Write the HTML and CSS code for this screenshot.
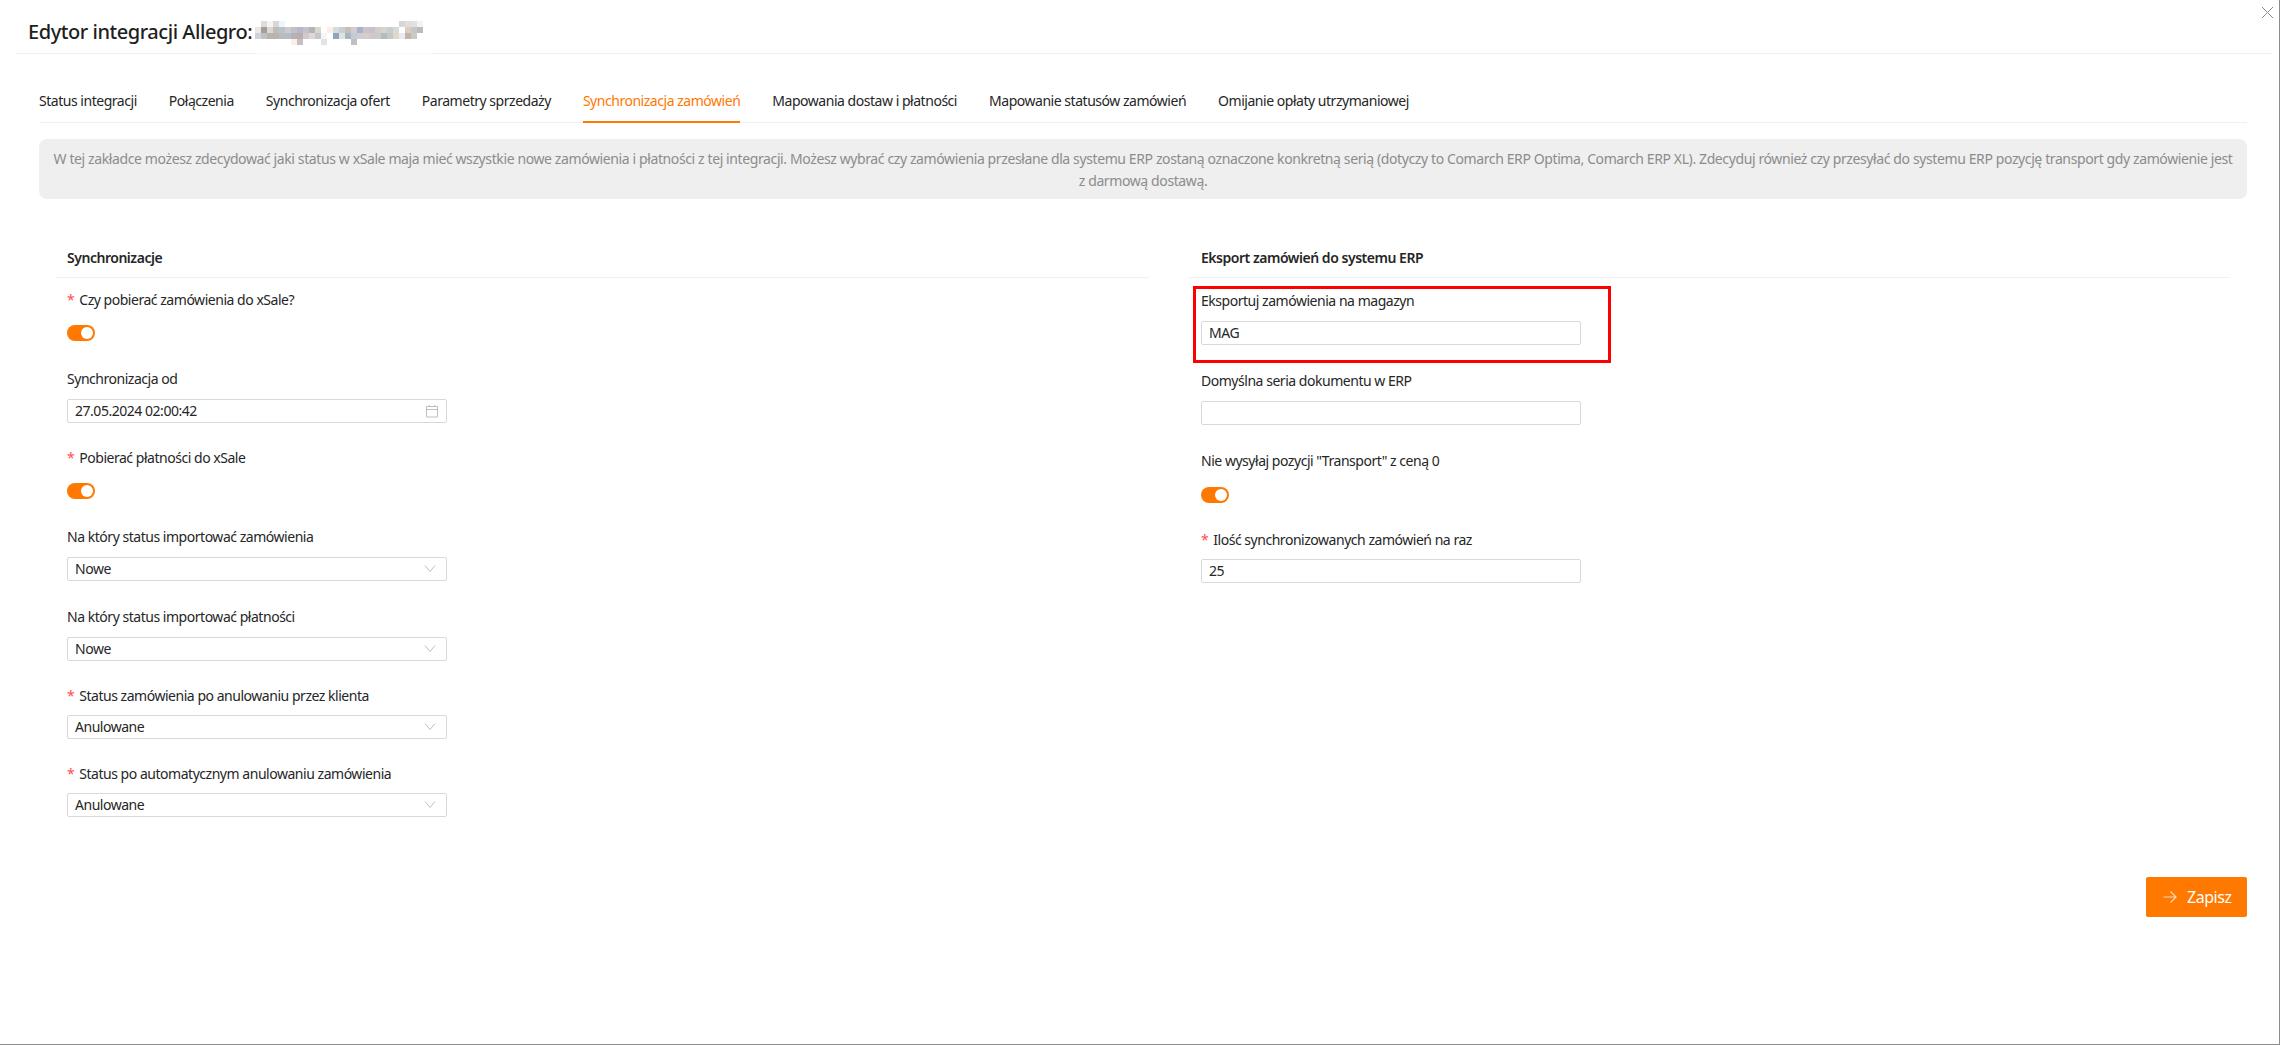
FILE: index.html
```html
<!DOCTYPE html>
<html lang="pl">

<head>
    <meta charset="UTF-8">
    <title>Edytor integracji Allegro</title>
    <link rel="stylesheet" href="styles.css">
</head>

<body>
    <div class="window">
        <a class="close_btn">
            <svg width="13" height="13" viewBox="0 0 13 13"><path d="M1 1L12 12M12 1L1 12" stroke="#8c8c8c" stroke-width="1" fill="none"/></svg>
        </a>
        <div class="title_bar">
            <h1>Edytor integracji Allegro:</h1>
            <!-- zamazana nazwa konta -->
            <svg class="blur_name" width="178" height="34" viewBox="0 0 178 34" shape-rendering="crispEdges">
                <rect x="0" y="33" width="178" height="1" fill="#fafafa"/>
                <g>
                    <rect x="6" y="1" width="6" height="6" fill="#dedbdc"/>
                    <rect x="12" y="1" width="6" height="6" fill="#f9f3ee"/>
                    <rect x="18" y="1" width="6" height="6" fill="#dad7d5"/>
                    <rect x="24" y="1" width="6" height="6" fill="#eef6fb"/>
                    <rect x="144" y="1" width="6" height="6" fill="#d8d5d5"/>
                    <rect x="150" y="1" width="6" height="6" fill="#e0dddd"/>
                    <rect x="156" y="1" width="6" height="6" fill="#e2e1e1"/>
                    <rect x="162" y="1" width="6" height="6" fill="#eef5f2"/>
                </g>
                <g>
                    <rect x="0" y="7" width="6" height="6" fill="#f0e6df"/>
                    <rect x="6" y="7" width="6" height="6" fill="#9f9f9c"/>
                    <rect x="12" y="7" width="6" height="6" fill="#dcd7d0"/>
                    <rect x="18" y="7" width="6" height="6" fill="#bfbdb9"/>
                    <rect x="24" y="7" width="6" height="6" fill="#b8c4cc"/>
                    <rect x="30" y="7" width="6" height="6" fill="#cfc9cb"/>
                    <rect x="36" y="7" width="6" height="6" fill="#c2c0c7"/>
                    <rect x="42" y="7" width="6" height="6" fill="#b5b8c8"/>
                    <rect x="48" y="7" width="6" height="6" fill="#c4c0cc"/>
                    <rect x="54" y="7" width="6" height="6" fill="#b5b2b8"/>
                    <rect x="60" y="7" width="6" height="6" fill="#d8d8cc"/>
                    <rect x="72" y="7" width="6" height="6" fill="#fbefe6"/>
                    <rect x="78" y="7" width="6" height="6" fill="#d5dde2"/>
                    <rect x="84" y="7" width="6" height="6" fill="#cbd0ce"/>
                    <rect x="90" y="7" width="6" height="6" fill="#c4bfba"/>
                    <rect x="96" y="7" width="6" height="6" fill="#d0ccd0"/>
                    <rect x="102" y="7" width="6" height="6" fill="#a9b2c9"/>
                    <rect x="108" y="7" width="6" height="6" fill="#c9c5c9"/>
                    <rect x="114" y="7" width="6" height="6" fill="#c8c2c6"/>
                    <rect x="120" y="7" width="6" height="6" fill="#d2cccb"/>
                    <rect x="126" y="7" width="6" height="6" fill="#d7d5ca"/>
                    <rect x="132" y="7" width="6" height="6" fill="#c5ced0"/>
                    <rect x="138" y="7" width="6" height="6" fill="#d6d9d6"/>
                    <rect x="150" y="7" width="6" height="6" fill="#ddccc2"/>
                    <rect x="156" y="7" width="6" height="6" fill="#c9c4c6"/>
                    <rect x="162" y="7" width="6" height="6" fill="#bdbbb3"/>
                </g>
                <g>
                    <rect x="0" y="13" width="6" height="6" fill="#cdd2d6"/>
                    <rect x="6" y="13" width="6" height="6" fill="#c0c1c3"/>
                    <rect x="12" y="13" width="6" height="6" fill="#b7b4ae"/>
                    <rect x="18" y="13" width="6" height="6" fill="#b8b4ae"/>
                    <rect x="24" y="13" width="6" height="6" fill="#b8bcbe"/>
                    <rect x="30" y="13" width="6" height="6" fill="#b3bcc8"/>
                    <rect x="36" y="13" width="6" height="6" fill="#bab0b4"/>
                    <rect x="42" y="13" width="6" height="6" fill="#b9adb0"/>
                    <rect x="48" y="13" width="6" height="6" fill="#cfc9c8"/>
                    <rect x="54" y="13" width="6" height="6" fill="#e0d6d2"/>
                    <rect x="60" y="13" width="6" height="6" fill="#c4c8cc"/>
                    <rect x="66" y="13" width="6" height="6" fill="#f4f6f8"/>
                    <rect x="78" y="13" width="6" height="6" fill="#8fa2c0"/>
                    <rect x="84" y="13" width="6" height="6" fill="#dde4e0"/>
                    <rect x="90" y="13" width="6" height="6" fill="#a9b5c0"/>
                    <rect x="96" y="13" width="6" height="6" fill="#c8ccd0"/>
                    <rect x="102" y="13" width="6" height="6" fill="#ccced4"/>
                    <rect x="108" y="13" width="6" height="6" fill="#d8ccc8"/>
                    <rect x="114" y="13" width="6" height="6" fill="#d0c8c8"/>
                    <rect x="120" y="13" width="6" height="6" fill="#c8cacc"/>
                    <rect x="126" y="13" width="6" height="6" fill="#b5bcb8"/>
                    <rect x="132" y="13" width="6" height="6" fill="#c4c8c4"/>
                    <rect x="138" y="13" width="6" height="6" fill="#e0d8c8"/>
                    <rect x="144" y="13" width="6" height="6" fill="#e4ecf4"/>
                    <rect x="150" y="13" width="6" height="6" fill="#c4b4a4"/>
                    <rect x="156" y="13" width="6" height="6" fill="#c8ccc8"/>
                </g>
                <g>
                    <rect x="36" y="19" width="6" height="6" fill="#f8efe8"/>
                    <rect x="42" y="19" width="6" height="6" fill="#c8c0c0"/>
                    <rect x="66" y="19" width="6" height="6" fill="#e4e2e2"/>
                    <rect x="96" y="19" width="6" height="6" fill="#c0bfc2"/>
                </g>
            </svg>
        </div>

        <ul class="tabs">
            <li>Status integracji</li>
            <li>Połączenia</li>
            <li>Synchronizacja ofert</li>
            <li>Parametry sprzedaży</li>
            <li class="active">Synchronizacja zamówień</li>
            <li>Mapowania dostaw i płatności</li>
            <li>Mapowanie statusów zamówień</li>
            <li>Omijanie opłaty utrzymaniowej</li>
        </ul>

        <div class="info_box">W tej zakładce możesz zdecydować jaki status w xSale maja mieć wszystkie nowe zamówienia i płatności z tej integracji. Możesz wybrać czy zamówienia przesłane dla systemu ERP zostaną oznaczone konkretną serią (dotyczy to Comarch ERP Optima, Comarch ERP XL). Zdecyduj również czy przesyłać do systemu ERP pozycję transport gdy zamówienie jest<br>z darmową dostawą.</div>

        <div class="columns">
            <section class="col col_left">
                <h2>Synchronizacje</h2>
                <div class="field field_req field_toggle">
                    <label><span class="req">*</span>Czy pobierać zamówienia do xSale?</label>
                    <div class="control"><span class="switch"></span></div>
                </div>
                <div class="field">
                    <label>Synchronizacja od</label>
                    <div class="input"><span>27.05.2024 02:00:42</span>
                        <svg class="cal" width="14" height="14" viewBox="0 0 14 14"><path d="M1.5 2.5H12.5V13H1.5ZM1.5 5.5H12.5M4 1V3M10 1V3" stroke="#bfbfbf" fill="none"/></svg>
                    </div>
                </div>
                <div class="field field_req field_toggle">
                    <label><span class="req">*</span>Pobierać płatności do xSale</label>
                    <div class="control"><span class="switch"></span></div>
                </div>
                <div class="field">
                    <label>Na który status importować zamówienia</label>
                    <div class="input"><span>Nowe</span>
                        <svg class="arrow" width="12" height="12" viewBox="0 0 12 12"><path d="M1 2.5L6 8.5L11 2.5" stroke="#bfbfbf" fill="none"/></svg>
                    </div>
                </div>
                <div class="field">
                    <label>Na który status importować płatności</label>
                    <div class="input"><span>Nowe</span>
                        <svg class="arrow" width="12" height="12" viewBox="0 0 12 12"><path d="M1 2.5L6 8.5L11 2.5" stroke="#bfbfbf" fill="none"/></svg>
                    </div>
                </div>
                <div class="field field_req">
                    <label><span class="req">*</span>Status zamówienia po anulowaniu przez klienta</label>
                    <div class="input"><span>Anulowane</span>
                        <svg class="arrow" width="12" height="12" viewBox="0 0 12 12"><path d="M1 2.5L6 8.5L11 2.5" stroke="#bfbfbf" fill="none"/></svg>
                    </div>
                </div>
                <div class="field field_req">
                    <label><span class="req">*</span>Status po automatycznym anulowaniu zamówienia</label>
                    <div class="input"><span>Anulowane</span>
                        <svg class="arrow" width="12" height="12" viewBox="0 0 12 12"><path d="M1 2.5L6 8.5L11 2.5" stroke="#bfbfbf" fill="none"/></svg>
                    </div>
                </div>
            </section>

            <section class="col col_right">
                <h2>Eksport zamówień do systemu ERP</h2>
                <div class="field marked">
                    <label>Eksportuj zamówienia na magazyn</label>
                    <div class="input"><span>MAG</span></div>
                </div>
                <div class="field">
                    <label>Domyślna seria dokumentu w ERP</label>
                    <div class="input"></div>
                </div>
                <div class="field field_toggle">
                    <label>Nie wysyłaj pozycji "Transport" z ceną 0</label>
                    <div class="control"><span class="switch"></span></div>
                </div>
                <div class="field field_req">
                    <label><span class="req">*</span>Ilość synchronizowanych zamówień na raz</label>
                    <div class="input"><span>25</span></div>
                </div>
            </section>
        </div>

        <div class="actions">
            <a class="save_btn">
                <svg width="14" height="14" viewBox="0 0 14 14"><path d="M0.5 7H13M7.5 1.5L13 7L7.5 12.5" stroke="#ffd9b8" stroke-width="1.2" fill="none"/></svg>
                Zapisz
            </a>
        </div>
    </div>
</body>

</html>
```

FILE: styles.css
```css
* {
    margin: 0;
    padding: 0;
    box-sizing: border-box;
}

html,
body {
    height: 100%;
    background: #fff;
}

body {
    font-family: "Noto Sans", "Open Sans", sans-serif;
    font-size: 14px;
    letter-spacing: -0.47px;
    color: #262626;
    overflow: hidden;
}

.window {
    position: relative;
    height: 1045px;
    width: 2280px;
    border-right: 1px solid #8c8c8c;
    border-bottom: 1px solid #8c8c8c;
}

.close_btn {
    position: absolute;
    top: 6px;
    left: 2261px;
    line-height: 0;
}

.title_bar {
    height: 54px;
    margin: 0 7px 0 15px;
    padding: 17px 0 0 13px;
    border-bottom: 1px solid #f0f0f0;
    display: flex;
    align-items: flex-start;
}

.title_bar h1 {
    font-size: 20px;
    font-weight: 500;
    line-height: 30px;
    letter-spacing: -0.45px;
    color: #1f1f1f;
}

.blur_name {
    flex: none;
    margin: 3px 0 0 3px;
}

.tabs {
    list-style: none;
    display: flex;
    gap: 32px;
    margin: 33px 32px 0 39px;
    height: 36px;
    border-bottom: 1px solid #f0f0f0;
}

.tabs li {
    line-height: 27px;
    height: 36px;
    white-space: nowrap;
}

.tabs .active {
    color: #ff7800;
    border-bottom: 2px solid #ff7800;
}

.info_box {
    margin: 16px 32px 0 39px;
    height: 60px;
    padding: 9px 12px 0;
    background: #efefef;
    border-radius: 8px;
    color: #8c8c8c;
    line-height: 22px;
    letter-spacing: -0.39px;
    text-align: center;
    white-space: nowrap;
}

.columns {
    display: flex;
    gap: 40px;
    margin: 48px 0 0 55px;
}

.col_left {
    width: 1094px;
}

.col_right {
    width: 1041px;
}

.col h2 {
    font-size: 14px;
    font-weight: 600;
    line-height: 20px;
    padding: 1px 12px 0;
    height: 31px;
    border-bottom: 1px solid #f0f0f0;
    margin-bottom: 13px;
}

.field {
    padding: 0 12px;
    height: 80px;
}

.field label {
    display: block;
    line-height: 20px;
    margin-bottom: 10px;
}

.field_req {
    height: 78px;
}

.field_req label {
    line-height: 18px;
}

.field_toggle label {
    margin-bottom: 12px;
}

.req {
    color: #ff4d4f;
    margin-right: 5px;
}

.input {
    width: 380px;
    height: 24px;
    border: 1px solid #d9d9d9;
    border-radius: 2px;
    padding: 0 7px;
    line-height: 22px;
    display: flex;
    align-items: center;
    justify-content: space-between;
}

.arrow {
    margin-right: 3px;
}

.control {
    height: 24px;
    display: flex;
    align-items: center;
}

.switch {
    display: block;
    position: relative;
    width: 28px;
    height: 16px;
    border-radius: 8px;
    background: #ff7800;
}

.switch::after {
    content: "";
    position: absolute;
    top: 2px;
    right: 2px;
    width: 12px;
    height: 12px;
    border-radius: 50%;
    background: #fff;
}

.marked {
    position: relative;
}

/* czerwona ramka dookola pola */
.marked::before {
    content: "";
    position: absolute;
    top: -5px;
    left: 4px;
    width: 412px;
    height: 71px;
    border: 3px solid #ff0000;
}

.actions {
    position: absolute;
    top: 877px;
    right: 32px;
}

.save_btn {
    display: flex;
    align-items: center;
    gap: 10px;
    width: 101px;
    height: 40px;
    padding-left: 17px;
    background: #ff7800;
    border-radius: 2px;
    color: #fff;
    font-size: 16px;
}
```
